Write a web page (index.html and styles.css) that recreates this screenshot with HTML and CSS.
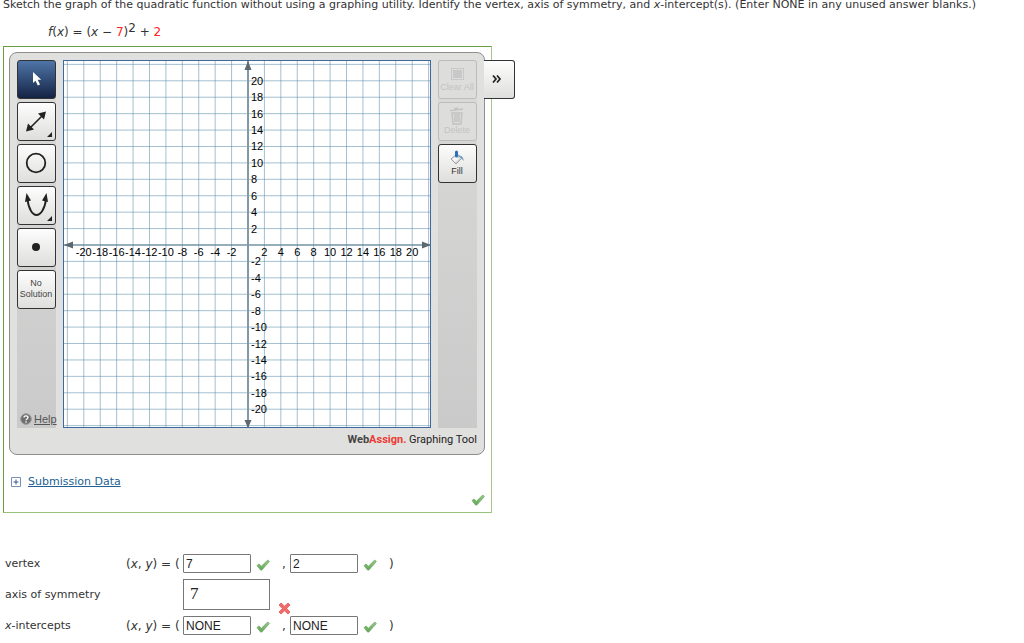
FILE: index.html
```html
<!DOCTYPE html>
<html lang="en">
<head>
<meta charset="utf-8">
<title>Quadratic function graph</title>
<link rel="stylesheet" href="styles.css">
</head>
<body>
<svg class="defs" width="0" height="0" aria-hidden="true">
  <defs>
    <linearGradient id="green" x1="0" y1="0" x2="0" y2="1"><stop offset="0" stop-color="#98cb88"/><stop offset="1" stop-color="#5fa553"/></linearGradient>
    <symbol id="check" viewBox="0 0 14 12"><path d="M1 6.600 3 5l2.400 2.200L11.800 1l1.500 1.600-7.500 8.500H4.600Z" fill="url(#green)" stroke="#6fa864" stroke-width=".8" stroke-linejoin="round"/></symbol>
    <symbol id="cross" viewBox="0 0 13 13"><path d="M1 3 3 1l3.500 3.200L10 1l2 2-3.300 3.500L12 10l-2 2-3.500-3.200L3 12l-2-2 3.300-3.500Z" fill="#ee6d6a" stroke="#e25856" stroke-width=".8" stroke-linejoin="round"/></symbol>
  </defs>
</svg>
<main>
  <p class="prompt">Sketch the graph of the quadratic function without using a graphing utility. Identify the vertex, axis of symmetry, and <i>x</i>-intercept(s). (Enter NONE in any unused answer blanks.)</p>
  <p class="formula"><i>f</i>(<i>x</i>) = (<i>x</i> − <span class="red">7</span>)<sup>2</sup> + <span class="red">2</span></p>

  <section class="answer-box">
    <div class="panel">
      <div class="workspace">
        <div class="tools">
          <button class="tool selected" type="button" aria-label="Select"><svg width="36" height="36" viewBox="0 0 36 36"><path d="M15 11v11l2.500-2.300 2.300 4.800 2.200-1-2.300-4.700h3.500Z" fill="#fff"/></svg></button>
          <button class="tool" type="button" aria-label="Line"><svg width="36" height="36" viewBox="0 0 36 36"><path d="m12 25 13-13" stroke="#222" stroke-width="1.600"/><path d="m8 28.500 2-8 6 6Zm20-20-8 2 6 6ZM34 29v5h-5Z" fill="#222"/></svg></button>
          <button class="tool" type="button" aria-label="Circle"><svg width="36" height="36" viewBox="0 0 36 36"><circle cx="18" cy="18" r="9.300" fill="none" stroke="#222" stroke-width="1.800"/></svg></button>
          <button class="tool" type="button" aria-label="Parabola"><svg width="36" height="36" viewBox="0 0 36 36"><path d="M9.500 12c1 10 5 16 9 16s8.500-6 9.500-16" fill="none" stroke="#222" stroke-width="1.900"/><path d="m8.500 6-1.500 9 6-1.500Zm20 0-4.500 7.500 6 1.500ZM34 29v5h-5Z" fill="#222"/></svg></button>
          <button class="tool" type="button" aria-label="Point"><svg width="36" height="36" viewBox="0 0 36 36"><circle cx="18" cy="18" r="4" fill="#222"/></svg></button>
          <button class="tool words" type="button">No<br>Solution</button>
          <a class="help" href="#help"><svg width="12" height="12" viewBox="0 0 12 12"><circle cx="6" cy="6" r="5.300" fill="#6e6e6e" stroke="#999"/><path d="M4 4.600C4 2.300 8 2.300 8 4.600 8 6 6 6 6 7.300M6 8.300v1.400" fill="none" stroke="#fff" stroke-width="1.300"/></svg><span>Help</span></a>
        </div>
        <svg class="graph" width="368" height="368" viewBox="0 0 368 368" role="img" aria-label="Coordinate plane from -20 to 20">
          <rect width="368" height="368" fill="#fff"/>
          <g id="grid"></g>
          <path class="axis" d="M0 185h368"/><path class="axis vertical" d="M185 0v368"/>
          <path class="arrow" d="M1 185l9-3.500v7Zm367 0-9-3.500v7ZM185 1l-3.500 9h7Zm0 367-3.500-8h7Z"/>
          <g id="labels"></g>
          <rect class="frame" x="0.500" y="0.500" width="367" height="367"/>
        </svg>
        <div class="tools actions">
          <button class="tool off" type="button" disabled><svg width="16" height="16" viewBox="0 0 16 16"><rect x="2.500" y="2.500" width="12" height="11" fill="none" stroke="#bbb"/><rect x="4" y="4" width="9" height="8" fill="#bbb"/></svg><span>Clear All</span></button>
          <button class="tool off" type="button" disabled><svg width="16" height="18" viewBox="0 0 16 18"><path d="M1 3.500 14 2M5 2l4-1M3 6l1 11h8l1-11ZM6 7v8m2-8v8m2-8v8" fill="none" stroke="#b3b3b3" stroke-width="1.500"/></svg><span>Delete</span></button>
          <button class="tool" type="button"><svg width="16" height="16" viewBox="0 0 16 16"><path d="m2 9 6-5 5 4-6 6Z" fill="#d7d7d7" stroke="#a0a0a0"/><path d="m3 9 4-3 3 3-4 3Z" fill="#f5f5f5"/><path d="M7.500 2v4" stroke="#2f70bb" stroke-width="3" stroke-linecap="round"/><path d="M9 6c3-1 6 1 5.500 5L12 8Z" fill="#739fc6"/></svg><span>Fill</span></button>
        </div>
      </div>
      <div class="brand"><b>Web<span>Assign.</span></b> Graphing Tool</div>
      <button class="expand" type="button" aria-label="Show more"><svg width="10" height="8" viewBox="0 0 10 8"><path d="m1 0.500 3 3.500-3 3.500M5 0.500 8 4 5 7.500" fill="none" stroke="#222" stroke-width="1.700"/></svg></button>
    </div>
    <a class="submission" href="#data"><svg width="10" height="10" viewBox="0 0 10 10"><path d="M.5.5h9v9h-9Z" fill="#fff" stroke="#7890b8"/><path d="M2.500 5h5M5 2.500v5" stroke="#315a99"/></svg><span>Submission Data</span></a>
    <svg class="mark" width="14" height="12"><use href="#check"/></svg>
  </section>

  <form class="answers">
    <div class="row">
      <span class="name">vertex</span>
      <span class="lead">(<i>x</i>, <i>y</i>) = (</span>
      <input type="text" aria-label="Vertex x" value="7"><svg class="ok" width="14" height="12"><use href="#check"/></svg>
      <span class="comma">,</span>
      <input type="text" aria-label="Vertex y" value="2"><svg class="ok" width="14" height="12"><use href="#check"/></svg>
      <span class="close">)</span>
    </div>
    <div class="row">
      <label class="name" for="axis">axis of symmetry</label>
      <span class="lead"></span>
      <input class="math" id="axis" type="text" value="7"><svg class="bad" width="13" height="13"><use href="#cross"/></svg>
    </div>
    <div class="row">
      <span class="name"><i>x</i>-intercepts</span>
      <span class="lead">(<i>x</i>, <i>y</i>) = (</span>
      <input type="text" aria-label="First x-intercept" value="NONE"><svg class="ok" width="14" height="12"><use href="#check"/></svg>
      <span class="comma">,</span>
      <input type="text" aria-label="Second x-intercept" value="NONE"><svg class="ok" width="14" height="12"><use href="#check"/></svg>
      <span class="close">)</span>
    </div>
  </form>
</main>
<script src="graph.js"></script>
</body>
</html>
```
FILE: styles.css
```css
* { box-sizing: border-box; }
body { margin: 0; background: #fff; color: #333; font: 11px/16px Verdana, "DejaVu Sans", sans-serif; }
.defs { position: absolute; }
svg { display: block; flex: none; }
main { padding: 0 3px; }
p { margin: 0; }
.prompt { margin-top: -3px; }
.formula { padding: 8px 0 0 45px; height: 33px; font-size: 12px; line-height: 22px; }
.formula sup { font-size: 12px; line-height: 0; vertical-align: 4px; }
.red { color: #f22; }
.answer-box { width: fit-content; padding: 5px 6px 5px 5px; border: 1px solid #6a9e40; border-right-color: #a5c98b; border-bottom-color: #98c37b; }
.panel { position: relative; padding: 7px; border: 1px solid #8e8e8e; border-radius: 8px; background: #e0e0df; }
.workspace { display: flex; gap: 7px; }
.tools { display: flex; flex-direction: column; gap: 3px; width: 39px; background: linear-gradient(#dadad9, #cacaca); }
.tool { display: flex; flex: none; flex-direction: column; align-items: center; justify-content: center; width: 39px; height: 39px; padding: 0 1px 1px 0; border: 1px solid #333; border-radius: 3px; background: linear-gradient(#fdfdfd, #dededc); color: #333; font: 9px/11px "Liberation Sans", sans-serif; white-space: nowrap; }
.selected { background: linear-gradient(#4f75a8, #142344); }
.words { color: #444; }
.off { border-color: #bcbcbc; background: #dddddc; color: #c4c4c4; }
.off svg { opacity: .6; }
.help { display: flex; align-items: center; gap: 2px; margin-top: auto; padding: 0 0 2px 3px; color: #555; font: 11px/14px "Liberation Sans", sans-serif; white-space: nowrap; }
.brand { padding-top: 4px; height: 19px; text-align: right; color: #222; font: 11px/16px Roboto, sans-serif; }
.brand b { color: #444; }
.brand b span { color: #ed3b34; }
.expand { position: absolute; top: 7px; left: 100%; display: flex; align-items: center; justify-content: center; width: 31px; height: 39px; padding: 0 4px 2px 0; border: 1px solid #333; border-left: 0; border-radius: 0 3px 3px 0; background: linear-gradient(#fdfdfd, #dededc); }
.submission { display: flex; align-items: center; gap: 7px; width: fit-content; margin: 19px 0 0 2px; color: #225f93; }
.mark { margin: 4px 0 1px auto; }
.graph text { fill: #000; font: 11px "Liberation Sans", sans-serif; }
.across { text-anchor: middle; }
.grid-line { stroke: #5a8cab; stroke-opacity: .55; stroke-width: 1; }
.axis { fill: none; stroke: #5d7f90; stroke-width: 1; }
.vertical { stroke-width: 2; stroke: #8199a7; }
.arrow { fill: #5d686e; }
.frame { fill: none; stroke: #41689c; }
.answers { display: flex; flex-direction: column; gap: 6px; margin-top: 41px; padding-left: 2px; }
.row { display: flex; align-items: center; min-height: 19px; }
.name { width: 121px; }
.lead { width: 57px; font-size: 12px; white-space: nowrap; }
.row input { width: 68px; height: 19px; padding: 0 2px; border: 1px solid #777; border-radius: 1px; background: #fff; color: #222; font: 12px/16px "Liberation Sans", sans-serif; }
.row .math { width: 87px; height: 31px; padding: 0 6px 2px; border-radius: 0; font: 17px/20px "Liberation Serif", serif; }
.ok { margin: 3px 0 0 5px; }
.bad { align-self: flex-end; margin: 0 0 -5px 8px; }
.comma { padding-left: 12px; width: 20px; font-size: 12px; }
.close { padding-left: 12px; font-size: 12px; }
```
FILE: graph.js
```js
const ns = 'http://www.w3.org/2000/svg';
const grid = document.getElementById('grid');
const labels = document.getElementById('labels');
const center = 185;
const step = 16.42;

function line(d) {
  const path = document.createElementNS(ns, 'path');
  path.setAttribute('class', 'grid-line');
  path.setAttribute('d', d);
  grid.append(path);
}

function label(value, x, y, className) {
  const text = document.createElementNS(ns, 'text');
  text.setAttribute('class', className);
  text.setAttribute('x', x);
  text.setAttribute('y', y);
  text.textContent = value;
  labels.append(text);
}

for (let i = -11; i <= 11; i++) {
  const offset = center + i * step;
  line(`M${offset} 0v368`);
  line(`M0 ${offset}h368`);
  if (i !== 0 && Math.abs(i) < 11) {
    label(i * 2, offset, center + 11, 'across');
    label(-i * 2, center + 3, offset + 4, 'down');
  }
}
```
